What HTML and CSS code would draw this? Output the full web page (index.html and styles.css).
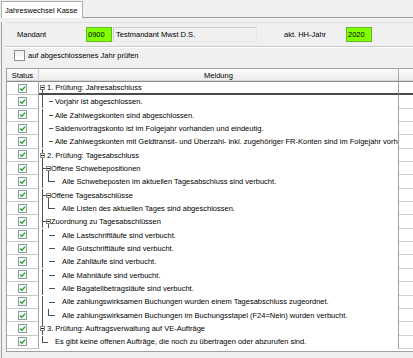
FILE: index.html
```html
<!DOCTYPE html>
<html lang="de">
<head>
<meta charset="utf-8">
<title>Jahreswechsel Kasse</title>
<link rel="stylesheet" href="styles.css">
</head>
<body>
<svg class="defs" xmlns="http://www.w3.org/2000/svg">
  <symbol id="chk" viewBox="0 0 9 9">
    <rect x="0.5" y="0.5" width="8" height="8" fill="#f6f8f9" stroke="#8d99a5"/>
    <path d="M2.1 4.5 3.9 6.3 7.1 2.6" fill="none" stroke="#22a022" stroke-width="1.3"/>
  </symbol>
  <symbol id="tA1" viewBox="0 0 8 13" preserveAspectRatio="none">
    <rect x="1.5" y="4.5" width="4" height="4" fill="#fff" stroke="#8a8a8a" vector-effect="non-scaling-stroke"/>
    <path d="M2 6.5H5" stroke="#222" vector-effect="non-scaling-stroke"/>
    <path d="M3.5 8.5V13" stroke="#505050" vector-effect="non-scaling-stroke"/>
  </symbol>
  <symbol id="tA" viewBox="0 0 8 13" preserveAspectRatio="none">
    <path d="M3.5 0V4.5M3.5 8.5V13" stroke="#505050" vector-effect="non-scaling-stroke"/>
    <rect x="1.5" y="4.5" width="4" height="4" fill="#fff" stroke="#8a8a8a" vector-effect="non-scaling-stroke"/>
    <path d="M2 6.5H5" stroke="#222" vector-effect="non-scaling-stroke"/>
  </symbol>
  <symbol id="tB" viewBox="0 0 16 13" preserveAspectRatio="none">
    <path d="M3.5 0V13M10 6.5H14" stroke="#505050" vector-effect="non-scaling-stroke"/>
  </symbol>
  <symbol id="tC" viewBox="0 0 12 13" preserveAspectRatio="none">
    <path d="M3.5 0V13M3.5 6.5H7.5M9.5 8.5V13" stroke="#505050" vector-effect="non-scaling-stroke"/>
    <rect x="7.5" y="4.5" width="4" height="4" fill="#fff" stroke="#8a8a8a" vector-effect="non-scaling-stroke"/>
    <path d="M8 6.5H11" stroke="#222" vector-effect="non-scaling-stroke"/>
  </symbol>
  <symbol id="tD" viewBox="0 0 23 13" preserveAspectRatio="none">
    <path d="M3.5 0V13M10 6.5H16" stroke="#505050" vector-effect="non-scaling-stroke"/>
  </symbol>
  <symbol id="tDl" viewBox="0 0 23 13" preserveAspectRatio="none">
    <path d="M3.5 0V13M9.5 0V6.5H16" fill="none" stroke="#505050" vector-effect="non-scaling-stroke"/>
  </symbol>
  <symbol id="tE" viewBox="0 0 16 13" preserveAspectRatio="none">
    <path d="M3.5 0V6.5H9" fill="none" stroke="#505050" vector-effect="non-scaling-stroke"/>
  </symbol>
</svg>

<div class="tabstrip">
  <div class="tab">Jahreswechsel Kasse</div>
  <div class="tabfill"></div>
</div>

<div class="panel">
  <div class="mandant">
    <span class="lbl lbl-mandant">Mandant</span>
    <span class="field green f-nr">0900</span>
    <span class="field f-name">Testmandant Mwst D.S.</span>
    <span class="lbl lbl-jahr">akt. HH-Jahr</span>
    <span class="field green f-jahr">2020</span>
  </div>

  <label class="optrow"><span class="cb"></span><span>auf abgeschlossenes Jahr prüfen</span></label>

  <div class="grid">
    <div class="hd hd-status">Status</div>
    <div class="hd hd-msg">Meldung</div>
    <div class="hd hd-ex"></div>

    <div class="st"><svg class="chk"><use href="#chk"/></svg></div>
    <div class="msg sel"><svg class="tr w8"><use href="#tA1"/></svg><span>1. Prüfung: Jahresabschluss</span></div>
    <div class="ex sel"></div>

    <div class="st"><svg class="chk"><use href="#chk"/></svg></div>
    <div class="msg"><svg class="tr w16"><use href="#tB"/></svg><span>Vorjahr ist abgeschlossen.</span></div>
    <div class="ex"></div>

    <div class="st"><svg class="chk"><use href="#chk"/></svg></div>
    <div class="msg"><svg class="tr w16"><use href="#tB"/></svg><span>Alle Zahlwegskonten sind abgeschlossen.</span></div>
    <div class="ex"></div>

    <div class="st"><svg class="chk"><use href="#chk"/></svg></div>
    <div class="msg"><svg class="tr w16"><use href="#tB"/></svg><span>Saldenvortragskonto ist im Folgejahr vorhanden und eindeutig.</span></div>
    <div class="ex"></div>

    <div class="st"><svg class="chk"><use href="#chk"/></svg></div>
    <div class="msg"><svg class="tr w16"><use href="#tB"/></svg><span>Alle Zahlwegskonten mit Geldtransit- und Überzahl- inkl. zugehöriger FR-Konten sind im Folgejahr vorhanden.</span></div>
    <div class="ex"></div>

    <div class="st"><svg class="chk"><use href="#chk"/></svg></div>
    <div class="msg"><svg class="tr w8"><use href="#tA"/></svg><span>2. Prüfung: Tagesabschluss</span></div>
    <div class="ex"></div>

    <div class="st"><svg class="chk"><use href="#chk"/></svg></div>
    <div class="msg"><svg class="tr w12"><use href="#tC"/></svg><span>Offene Schwebepositionen</span></div>
    <div class="ex"></div>

    <div class="st"><svg class="chk"><use href="#chk"/></svg></div>
    <div class="msg"><svg class="tr w23"><use href="#tDl"/></svg><span>Alle Schwebeposten im aktuellen Tagesabschluss sind verbucht.</span></div>
    <div class="ex"></div>

    <div class="st"><svg class="chk"><use href="#chk"/></svg></div>
    <div class="msg"><svg class="tr w12"><use href="#tC"/></svg><span>Offene Tagesabschlüsse</span></div>
    <div class="ex"></div>

    <div class="st"><svg class="chk"><use href="#chk"/></svg></div>
    <div class="msg"><svg class="tr w23"><use href="#tDl"/></svg><span>Alle Listen des aktuellen Tages sind abgeschlossen.</span></div>
    <div class="ex"></div>

    <div class="st"><svg class="chk"><use href="#chk"/></svg></div>
    <div class="msg"><svg class="tr w12"><use href="#tC"/></svg><span>Zuordnung zu Tagesabschlüssen</span></div>
    <div class="ex"></div>

    <div class="st"><svg class="chk"><use href="#chk"/></svg></div>
    <div class="msg"><svg class="tr w23"><use href="#tD"/></svg><span>Alle Lastschriftläufe sind verbucht.</span></div>
    <div class="ex"></div>

    <div class="st"><svg class="chk"><use href="#chk"/></svg></div>
    <div class="msg"><svg class="tr w23"><use href="#tD"/></svg><span>Alle Gutschriftläufe sind verbucht.</span></div>
    <div class="ex"></div>

    <div class="st"><svg class="chk"><use href="#chk"/></svg></div>
    <div class="msg"><svg class="tr w23"><use href="#tD"/></svg><span>Alle Zahlläufe sind verbucht.</span></div>
    <div class="ex"></div>

    <div class="st"><svg class="chk"><use href="#chk"/></svg></div>
    <div class="msg"><svg class="tr w23"><use href="#tD"/></svg><span>Alle Mahnläufe sind verbucht.</span></div>
    <div class="ex"></div>

    <div class="st"><svg class="chk"><use href="#chk"/></svg></div>
    <div class="msg"><svg class="tr w23"><use href="#tD"/></svg><span>Alle Bagatellbetragsläufe sind verbucht.</span></div>
    <div class="ex"></div>

    <div class="st"><svg class="chk"><use href="#chk"/></svg></div>
    <div class="msg"><svg class="tr w23"><use href="#tD"/></svg><span>Alle zahlungswirksamen Buchungen wurden einem Tagesabschluss zugeordnet.</span></div>
    <div class="ex"></div>

    <div class="st"><svg class="chk"><use href="#chk"/></svg></div>
    <div class="msg"><svg class="tr w23"><use href="#tDl"/></svg><span>Alle zahlungswirksamen Buchungen im Buchungsstapel (F24=Nein) wurden verbucht.</span></div>
    <div class="ex"></div>

    <div class="st"><svg class="chk"><use href="#chk"/></svg></div>
    <div class="msg"><svg class="tr w8"><use href="#tA"/></svg><span>3. Prüfung: Auftragsverwaltung auf VE-Aufträge</span></div>
    <div class="ex"></div>

    <div class="st"><svg class="chk"><use href="#chk"/></svg></div>
    <div class="msg"><svg class="tr w16"><use href="#tE"/></svg><span>Es gibt keine offenen Aufträge, die noch zu übertragen oder abzurufen sind.</span></div>
    <div class="ex"></div>
  </div>
</div>
</body>
</html>
```

FILE: styles.css
```css
* { box-sizing: border-box; }

html, body { margin: 0; padding: 0; }

body {
  width: 413px;
  height: 358px;
  overflow: hidden;
  background: #f0f0f0;
  font-family: "Liberation Sans", Arial, sans-serif;
  font-size: 7.5px;
  color: #000;
}

.defs {
  display: block;
  width: 0;
  height: 0;
  overflow: hidden;
}

/* tab strip */
.tabstrip {
  display: flex;
  height: 18px;
  padding-top: 1px;
}
.tab {
  margin-left: 1px;
  width: 82px;
  height: 17px;
  background: #fff;
  border: 1px solid #acacac;
  border-bottom: none;
  padding-left: 3px;
  display: flex;
  align-items: center;
}
.tabfill {
  flex: 1;
  border-bottom: 1px solid #a0a0a0;
}

/* panel */
.panel {
  margin-left: 1px;
  border-left: 1px solid #a0a0a0;
  height: 340px;
}

.mandant {
  margin: 4px 0 0 3px;
  height: 25px;
  border-top: 1px solid #e2e2e2;
  border-bottom: 1px solid #c9c9c9;
  box-shadow: 0 1px 0 #fff;
  display: flex;
  align-items: center;
  padding-left: 12px;
}
.lbl { white-space: nowrap; }
.lbl-mandant { width: 69px; }
.lbl-jahr { margin-left: 27px; width: 62px; }

.field {
  height: 15px;
  display: flex;
  align-items: center;
  border: 1px solid #cfcfcf;
  white-space: nowrap;
}
.green {
  background: #80ff00;
  border-color: #62b82a;
  padding-left: 1px;
}
.f-nr { width: 26px; }
.f-name {
  width: 144px;
  margin-left: 1px;
  background: #f0f0f0;
  border-color: #cdcdcd #e6e6e6 #e6e6e6 #cdcdcd;
  padding-left: 2px;
}
.f-jahr { width: 26px; }

.optrow {
  display: flex;
  align-items: center;
  margin: 3px 0 0 12px;
  height: 11px;
}
.cb {
  width: 11px;
  height: 11px;
  border: 1px solid #8f8f8f;
  background: linear-gradient(#f0f0f0, #fff);
  margin-right: 3px;
}

/* grid */
.grid {
  margin: 7px 0 0 4px;
  display: grid;
  grid-template-columns: 32px 360px 1fr;
  grid-template-rows: 13px repeat(20, 13.35px);
  border-top: 1px solid #a0a0a0;
  border-left: 1px solid #a0a0a0;
  border-bottom: 1px solid #a0a0a0;
  background: #fff;
  padding-bottom: 2px;
}

.hd {
  background: linear-gradient(#fbfbfb, #ebebeb);
  border-bottom: 1px solid #8c8c8c;
  box-shadow: inset 0 -1px 0 #d4d4d4;
  display: flex;
  align-items: center;
  justify-content: center;
  white-space: nowrap;
}
.hd-status { border-right: 1px solid #d0d0d0; }
.hd-msg { border-right: 1px solid #a8a8a8; }

.st {
  border-right: 1px solid #a0a0a0;
  border-bottom: 1px solid #c8c8c8;
  display: flex;
  align-items: center;
  justify-content: center;
}
.chk { width: 9px; height: 9px; display: block; }

.msg {
  border-right: 1px solid #a0a0a0;
  display: flex;
  align-items: center;
  overflow: hidden;
  white-space: nowrap;
}
.msg span { line-height: 1; }

.ex { border-bottom: 1px solid #d0d0d0; }

.sel { border-bottom: 2px solid #4a4a4a; }

.tr {
  flex: none;
  height: 100%;
  display: block;
  shape-rendering: crispEdges;
}
.w8 { width: 8px; }
.w12 { width: 12px; }
.w16 { width: 16px; }
.w23 { width: 23px; }
```
